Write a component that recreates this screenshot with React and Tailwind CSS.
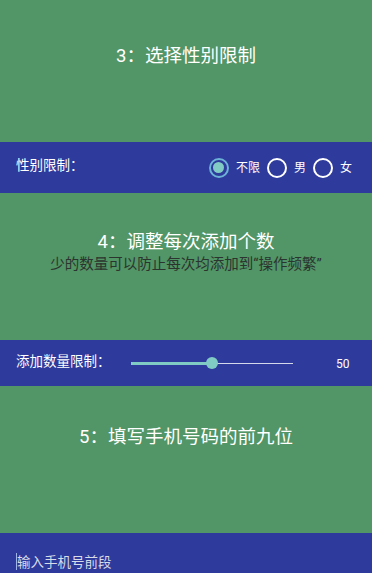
import React from 'react';

const font = { fontFamily: '"Roboto", "Noto Sans CJK SC", sans-serif' };

const Radio = ({ checked, label }) => (
  <div className="flex items-center">
    {checked ? (
      <div className="w-[20px] h-[20px] rounded-full border-2 border-[#6cb2d6] flex items-center justify-center">
        <div className="w-[11px] h-[11px] rounded-full bg-[#80cbc4]" />
      </div>
    ) : (
      <div className="w-[20px] h-[20px] rounded-full border-2 border-white" />
    )}
    <span className="ml-[7px] text-[12px] text-white">{label}</span>
  </div>
);

export default function App() {
  return (
    <div className="w-[372px] h-[573px] overflow-hidden bg-[#529566]" style={font}>
      <div className="h-[142px] flex justify-center pt-[44px]">
        <h2 className="text-[18.5px] text-white leading-[24px]">3：选择性别限制</h2>
      </div>

      <div className="h-[51px] bg-[#2e3a9c] flex items-center justify-between pl-[16px] pr-[20px]">
        <span className="text-[13.5px] text-white -mt-[4px]">性别限制：</span>
        <div className="flex items-center gap-[7px]">
          <Radio checked label="不限" />
          <Radio label="男" />
          <Radio label="女" />
        </div>
      </div>

      <div className="h-[147px] flex flex-col items-center pt-[38px]">
        <h2 className="text-[18.5px] text-white leading-[23px]">4：调整每次添加个数</h2>
        <p className="text-[14.5px] text-[#2b342e] leading-[21px]">少的数量可以防止每次均添加到“操作频繁”</p>
      </div>

      <div className="h-[46px] bg-[#2e3a9c] flex items-center pl-[16px]">
        <span className="text-[13.5px] text-white w-[115px] -mt-[4px]">添加数量限制：</span>
        <div className="relative w-[162px] h-[14px] flex items-center">
          <div className="h-[3px] w-[81px] bg-[#80cbc4]" />
          <div className="h-[1px] flex-1 bg-white/80" />
          <div className="absolute left-[75px] top-[1px] w-[12px] h-[12px] rounded-full bg-[#80cbc4]" />
        </div>
        <span className="ml-[43px] text-[12px] text-white mt-[2px]">50</span>
      </div>

      <div className="h-[147px] flex justify-center pt-[40px]">
        <h2 className="text-[18.5px] text-white leading-[23px]">5：填写手机号码的前九位</h2>
      </div>

      <div className="h-[40px] bg-[#2e3a9c] flex items-end pl-[16px] pb-[1px]">
        <div className="flex items-center">
          <div className="w-[1px] h-[17px] bg-[#9fb4e8]" />
          <span className="text-[13.5px] text-[#d8dbe8]">输入手机号前段</span>
        </div>
      </div>
    </div>
  );
}
